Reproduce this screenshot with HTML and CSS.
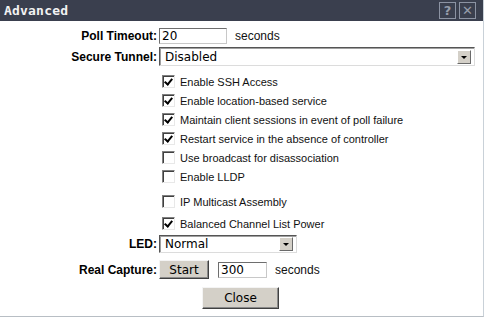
FILE: index.html
```html
<!DOCTYPE html>
<html lang="en">
<head>
    <meta charset="UTF-8">
    <title>Advanced</title>
    <link rel="stylesheet" href="styles.css">
</head>
<body>
    <div class="dialog">
        <div class="titlebar">
            <span class="title">Advanced</span>
            <span class="title-buttons">
                <span class="tbtn">?</span>
                <span class="tbtn">&#x2715;</span>
            </span>
        </div>
        <div class="body">
            <div class="row row-poll">
                <label class="label">Poll Timeout:</label>
                <div class="ctrl">
                    <span class="textbox tb-poll">20</span>
                    <span class="unit">seconds</span>
                </div>
            </div>
            <div class="row row-tunnel">
                <label class="label">Secure Tunnel:</label>
                <div class="ctrl">
                    <span class="select sel-tunnel"><span class="sel-text">Disabled</span><span class="sel-arrow"></span></span>
                </div>
            </div>

            <div class="checks">
                <div class="check on"><span class="box"></span>Enable SSH Access</div>
                <div class="check on"><span class="box"></span>Enable location-based service</div>
                <div class="check on"><span class="box"></span>Maintain client sessions in event of poll failure</div>
                <div class="check on"><span class="box"></span>Restart service in the absence of controller</div>
                <div class="check"><span class="box"></span>Use broadcast for disassociation</div>
                <div class="check"><span class="box"></span>Enable LLDP</div>
                <div class="check gap"><span class="box"></span>IP Multicast Assembly</div>
                <div class="check on"><span class="box"></span>Balanced Channel List Power</div>
            </div>

            <div class="row row-led">
                <label class="label">LED:</label>
                <div class="ctrl">
                    <span class="select sel-led"><span class="sel-text">Normal</span><span class="sel-arrow"></span></span>
                </div>
            </div>
            <div class="row row-capture">
                <label class="label">Real Capture:</label>
                <div class="ctrl">
                    <button class="btn btn-start">Start</button>
                    <span class="textbox tb-capture">300</span>
                    <span class="unit">seconds</span>
                </div>
            </div>
            <div class="footer">
                <button class="btn btn-close">Close</button>
            </div>
        </div>
    </div>
</body>
</html>
```

FILE: styles.css
```css
body {
    margin: 0;
    background: #ffffff;
    font-family: 'Liberation Sans', Arial, sans-serif;
    color: #000;
}
.dialog {
    width: 483px;
    height: 316px;
    border-right: 1px solid #c9d1d8;
    border-bottom: 1px solid #b8bec4;
    background: #fff;
}
.titlebar {
    height: 21px;
    background: #3a3f4e;
    display: flex;
    align-items: center;
    justify-content: space-between;
    padding: 0 7px 0 4px;
}
.title {
    font-family: 'DejaVu Sans Mono', monospace;
    font-weight: bold;
    font-size: 13px;
    color: #f2f2f2;
    letter-spacing: 0.2px;
}
.title-buttons {
    display: flex;
    gap: 3px;
}
.tbtn {
    width: 15px;
    height: 15px;
    border: 1px solid #8c93a3;
    color: #959caa;
    font-family: 'DejaVu Sans', sans-serif;
    font-weight: bold;
    font-size: 13px;
    line-height: 15px;
    text-align: center;
}
.body {
    padding-top: 7px;
}
.row {
    display: grid;
    grid-template-columns: 159px 1fr;
    align-items: center;
}
.label {
    font-weight: bold;
    font-size: 12px;
    text-align: right;
    padding-right: 2px;
}
.ctrl {
    display: flex;
    align-items: center;
}
.textbox {
    box-sizing: border-box;
    height: 16px;
    border: 1px solid;
    border-color: #6e6e6e #c8c8c8 #c8c8c8 #6e6e6e;
    font-family: 'DejaVu Sans', sans-serif;
    font-size: 12px;
    line-height: 14px;
    padding-left: 2px;
    background: #fff;
}
.tb-poll { width: 68px; }
.tb-capture { width: 49px; margin-left: 9px; }
.unit {
    font-size: 12px;
    margin-left: 8px;
    color: #111;
}
.row-tunnel { margin-top: 3px; }
.select {
    box-sizing: border-box;
    height: 19px;
    display: flex;
    align-items: center;
    border: 1px solid;
    border-color: #555 #dcdcdc #dcdcdc #555;
    box-shadow: inset 1px 1px 0 #a0a0a0;
    background: #fff;
}
.sel-tunnel { width: 316px; }
.sel-led { width: 138px; height: 18px; }
.sel-text {
    flex: 1;
    font-family: 'DejaVu Sans', sans-serif;
    font-size: 12px;
    padding-left: 5px;
}
.sel-arrow {
    width: 12px;
    height: 12px;
    margin-right: 3px;
    background: #d4d0c8;
    border: 1px solid;
    border-color: #fff #6a6a6a #6a6a6a #fff;
    position: relative;
}
.sel-arrow::after {
    content: "";
    position: absolute;
    left: 3px;
    top: 5px;
    border-left: 3px solid transparent;
    border-right: 3px solid transparent;
    border-top: 3px solid #000;
}
.checks {
    padding-left: 162px;
    margin-top: 6px;
}
.check {
    height: 19px;
    display: flex;
    align-items: center;
    font-size: 11px;
    color: #111;
}
.check.gap { margin-top: 6px; }
.check.gap + .check { margin-top: 3px; }
.box {
    box-sizing: border-box;
    width: 13px;
    height: 13px;
    margin-right: 5px;
    border: 1px solid;
    border-color: #808080 #e8e8e8 #e8e8e8 #808080;
    box-shadow: inset 1px 1px 0 #404040;
    background: #fff;
    position: relative;
}
.check.on .box::after {
    content: "";
    position: absolute;
    left: 3px;
    top: 1px;
    width: 3px;
    height: 6px;
    border: solid #000;
    border-width: 0 2px 2px 0;
    transform: rotate(40deg);
}
.row-led { margin-top: 2px; }
.row-capture { margin-top: 7px; }
.btn {
    font-family: 'DejaVu Sans', sans-serif;
    font-size: 12px;
    background: #d4d0c8;
    border: 1px solid;
    border-color: #f4f4f4 #404040 #404040 #f4f4f4;
    box-shadow: inset -1px -1px 0 #8a8a8a;
    padding: 0;
    color: #000;
}
.btn-start {
    width: 50px;
    height: 19px;
}
.footer {
    display: flex;
    padding-left: 202px;
    margin-top: 8px;
}
.btn-close {
    width: 77px;
    height: 22px;
}
```
